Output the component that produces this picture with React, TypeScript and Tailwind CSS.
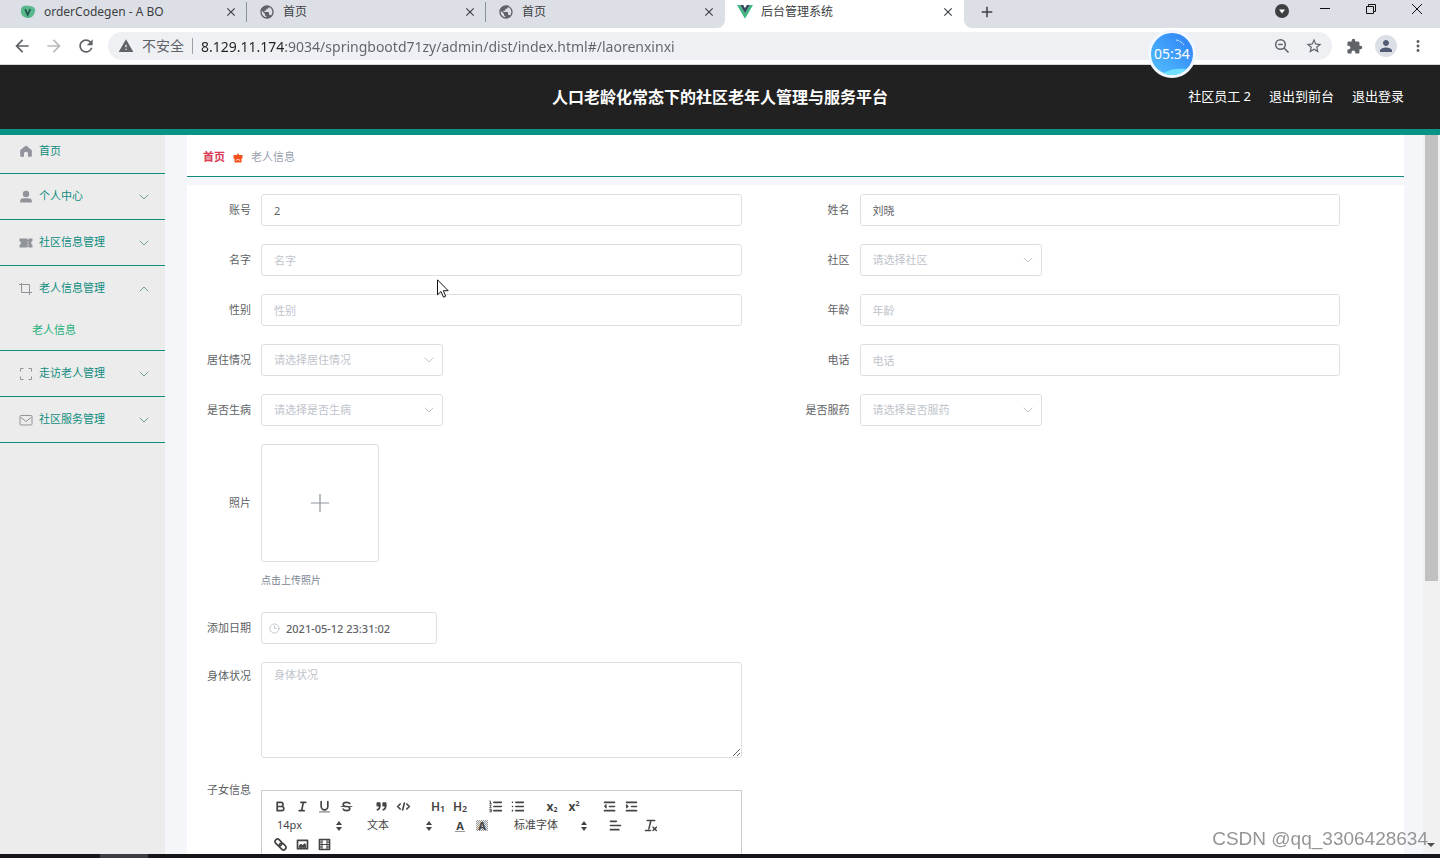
import { useState } from "react";
import type { ReactNode } from "react";
import {
  MdAdd,
  MdArrowBack,
  MdArrowForward,
  MdClose,
  MdExtension,
  MdMoreVert,
  MdPerson,
  MdPublic,
  MdRefresh,
  MdStarBorder,
  MdWarning,
} from "react-icons/md";
import { ChevronDown, ChevronUp, Clock3 } from "lucide-react";

const tabs = [
  { title: "orderCodegen - A BO", icon: <LeafLogo />, active: false },
  { title: "首页", icon: <MdPublic className="w-4 h-4 text-[#5f6368]" />, active: false },
  { title: "首页", icon: <MdPublic className="w-4 h-4 text-[#5f6368]" />, active: false },
  { title: "后台管理系统", icon: <VueLogo />, active: true },
];

const menu = [
  { title: "个人中心", icon: <UserIcon /> },
  { title: "社区信息管理", icon: <TicketIcon /> },
  { title: "老人信息管理", icon: <CropIcon />, children: ["老人信息"] },
  { title: "走访老人管理", icon: <FullScreenIcon /> },
  { title: "社区服务管理", icon: <MessageIcon /> },
];

function LeafLogo() {
  return (
    <svg viewBox="0 0 14 14" className="w-4 h-4">
      <path d="M1 4C2 1 6 1 9 2c3 0 5 2 4 5-1 4-4 6-7 5C2 12 0 8 1 4Z" fill="#57b98c" />
      <path d="M4.5 4.5 6.7 9.5 9 4.5" fill="none" stroke="#24574a" strokeWidth="1.6" />
    </svg>
  );
}

function VueLogo() {
  return (
    <svg viewBox="0 0 16 14" className="w-4 h-4">
      <path d="M0 0h3.2L8 8.3 12.8 0H16L8 13.8Z" fill="#41b883" />
      <path d="M3.2 0h3L8 3.2 9.8 0h3L8 8.3Z" fill="#35495e" />
    </svg>
  );
}

function HomeIcon() {
  return (
    <svg viewBox="0 0 14 14" className="w-[14px] h-[14px]" fill="#909399">
      <path d="M7 1.5 12.6 6c.2.2.2.4.2.6V12c0 .4-.3.7-.7.7H9V9.500c0-1-.9-1.700-2-1.700s-2 .7-2 1.700v3.200H1.900c-.4 0-.7-.3-.7-.7V6.600c0-.2 0-.4.200-.6Z" />
    </svg>
  );
}

function UserIcon() {
  return (
    <svg viewBox="0 0 14 14" className="w-[14px] h-[14px]" fill="#909399">
      <circle cx="7" cy="4" r="3.2" />
      <path d="M1.2 12.5V11c0-1.6 1.3-2.7 3-2.7h5.600c1.700 0 3 1.100 3 2.700v1.500Z" />
    </svg>
  );
}

function TicketIcon() {
  return (
    <svg viewBox="0 0 14 14" className="w-[14px] h-[14px]" fill="#909399">
      <path d="M.5 2.500h8v1.300h1V2.500h4v2.600a2 2 0 0 0 0 3.800v2.600h-4v-1.300h-1v1.300h-8V8.900a2 2 0 0 0 0-3.800Zm8 3v1.300h1V5.500Zm0 2.500v1.300h1V8Z" />
    </svg>
  );
}

function CropIcon() {
  return (
    <svg viewBox="0 0 14 14" className="w-[14px] h-[14px]" fill="none" stroke="#909399">
      <path d="M2.500 1v9.500H13M0 2.500h10.500V13" />
    </svg>
  );
}

function FullScreenIcon() {
  return (
    <svg viewBox="0 0 14 14" className="w-[14px] h-[14px]" fill="none" stroke="#909399">
      <path d="M4.500 1.500h-3v3M9.500 1.500h3v3M1.500 9.500v3h3M12.500 9.500v3h-3" />
    </svg>
  );
}

function MessageIcon() {
  return (
    <svg viewBox="0 0 14 14" className="w-[14px] h-[14px]" fill="none" stroke="#909399">
      <rect x="1" y="2.500" width="12" height="9.500" rx="1" />
      <path d="m2 4.500 5 4 5-4" />
    </svg>
  );
}

function Glyph({ children }: { children: ReactNode }) {
  return (
    <svg viewBox="0 0 18 18" className="w-[15px] h-[15px]" fill="none" stroke="#444" strokeWidth="2" strokeLinecap="round" strokeLinejoin="round">
      {children}
    </svg>
  );
}

function ToolButton({ label, children }: { label: string; children: ReactNode }) {
  return (
    <button type="button" aria-label={label} className="w-[22px] h-[19px] flex items-center justify-center text-[#444]">
      {children}
    </button>
  );
}

function PickerSelect({ label, options, className }: { label: string; options: string[]; className: string }) {
  return (
    <span className={`relative flex items-center ${className}`}>
      <select aria-label={label} className="appearance-none w-full h-[19px] pl-2 text-[11px] text-[#444] bg-transparent outline-none">
        {options.map((option) => (
          <option key={option}>{option}</option>
        ))}
      </select>
      <svg viewBox="0 0 6 10" className="absolute right-1 w-[6px] h-[10px] pointer-events-none" fill="#444">
        <path d="M3 0 6 4H0ZM3 10 0 6h6Z" />
      </svg>
    </span>
  );
}

function BrowserChrome() {
  return (
    <div className="shrink-0">
      {/* Tab strip */}
      <div className="flex h-7 bg-white text-[#3c4043]">
        <div className="flex pl-2 bg-[#dcdfe6] rounded-br-lg">
          {tabs.slice(0, 3).map((tab, i) => (
            <BrowserTab key={i} {...tab} divider={i < 2} />
          ))}
        </div>
        <BrowserTab {...tabs[3]} divider={false} />
        <div className="flex flex-1 justify-between bg-[#dcdfe6] rounded-bl-lg">
          <button type="button" aria-label="新标签页" className="w-11 h-6 pl-px flex items-center justify-center">
            <MdAdd className="w-[18px] h-[18px]" />
          </button>
          <div className="flex h-[22px] items-center">
            <button type="button" aria-label="搜索标签页" className="w-10 flex justify-center">
              <svg viewBox="0 0 14 14" className="w-[14px] h-[14px]">
                <circle cx="7" cy="7" r="7" fill="#3c4043" />
                <path d="M4 5.500h6L7 9.500Z" fill="#fff" />
              </svg>
            </button>
            <button type="button" aria-label="最小化" className="w-[46px] flex justify-center pb-1">
              <svg viewBox="0 0 12 12" className="w-3 h-3" stroke="#111">
                <path d="M1 5.500h10" />
              </svg>
            </button>
            <button type="button" aria-label="还原" className="w-[46px] flex justify-center pb-1">
              <svg viewBox="0 0 12 12" className="w-3 h-3" fill="none" stroke="#111">
                <path d="M1.500 3.500h7v7h-7ZM3.500 3.500v-2h7v7h-2" />
              </svg>
            </button>
            <button type="button" aria-label="关闭" className="w-[46px] flex justify-center pb-1">
              <svg viewBox="0 0 12 12" className="w-3 h-3" stroke="#111">
                <path d="m1 1 10 10M11 1 1 11" />
              </svg>
            </button>
          </div>
        </div>
      </div>

      {/* Address bar */}
      <div className="flex items-center h-[37px] pl-1.5 pr-1.5 bg-white border-b border-[#d5d7db] text-[#5f6368]">
        <button type="button" aria-label="后退" className="w-8 flex justify-center">
          <MdArrowBack className="w-5 h-5" />
        </button>
        <button type="button" aria-label="前进" className="w-8 flex justify-center text-[#b8babd]">
          <MdArrowForward className="w-5 h-5" />
        </button>
        <button type="button" aria-label="重新加载" className="w-8 flex justify-center">
          <MdRefresh className="w-5 h-5" />
        </button>
        <div className="flex flex-1 items-center h-7 ml-1.5 pl-2.5 pr-0.5 rounded-full bg-[#eff0f3]">
          <MdWarning className="w-4 h-4" />
          <span className="ml-2 text-sm">不安全</span>
          <span className="w-px h-4 mx-2 bg-[#9aa0a6]" />
          {/* Host part is darker than the path */}
          <input
            aria-label="地址"
            defaultValue="8.129.11.174:9034/springbootd71zy/admin/dist/index.html#/laorenxinxi"
            className="flex-1 min-w-0 h-7 text-sm text-transparent bg-clip-text bg-[linear-gradient(90deg,#202124_84px,#5f6368_84px)] outline-none"
          />
          <button type="button" aria-label="缩小" className="w-8 flex justify-center">
            <svg viewBox="0 0 16 16" className="w-4 h-4" fill="none" stroke="#5f6368" strokeWidth="1.5">
              <circle cx="6.500" cy="6.500" r="4.800" />
              <path d="m10 10 4.500 4.500M4.200 6.500h4.600" />
            </svg>
          </button>
          <button type="button" aria-label="收藏" className="w-8 flex justify-center">
            <MdStarBorder className="w-[18px] h-[18px]" />
          </button>
        </div>
        <button type="button" aria-label="扩展程序" className="w-8 ml-1.5 flex justify-center">
          <MdExtension className="w-[17px] h-[17px]" />
        </button>
        <button type="button" aria-label="用户" className="w-8 flex justify-center">
          <span className="w-[22px] h-[22px] rounded-full bg-[#dcdfe6] flex items-center justify-center">
            <MdPerson className="w-[18px] h-[18px] text-[#4f5b73]" />
          </span>
        </button>
        <button type="button" aria-label="更多" className="w-8 flex justify-center">
          <MdMoreVert className="w-[18px] h-[18px]" />
        </button>
      </div>
    </div>
  );
}

function BrowserTab({ title, icon, active, divider }: { title: string; icon: ReactNode; active: boolean; divider: boolean }) {
  return (
    <div className={`flex items-center w-[239px] h-6 pl-3 ${active ? "bg-white" : ""}`}>
      {icon}
      <span className="flex-1 ml-2 text-xs whitespace-nowrap">{title}</span>
      <button type="button" aria-label="关闭标签页" className="mr-2">
        <MdClose className="w-[14px] h-[14px]" />
      </button>
      <span className={`w-px h-5 ${divider ? "bg-[#8b8f96]" : ""}`} />
    </div>
  );
}

function Sidebar() {
  const [open, setOpen] = useState("老人信息管理");

  return (
    <nav className="w-[165px] shrink-0 bg-[#ececec] text-[11px] text-[#0f8c7e]">
      <a href="#/" className="flex items-center h-[39px] pl-[19px] pb-[6px] border-b border-[#0f8c7e]">
        <HomeIcon />
        <span className="ml-[6px]">首页</span>
      </a>
      {menu.map((item) => (
        <div key={item.title} className="border-b border-[#0f8c7e]">
          <button
            type="button"
            onClick={() => setOpen(open === item.title ? "" : item.title)}
            className="flex items-center w-full h-[45px] pl-[19px] pr-[13px]"
          >
            {item.icon}
            <span className="flex-1 ml-[6px] text-left">{item.title}</span>
            {open === item.title ? (
              <ChevronUp className="w-4 h-4 text-[#6f9f99]" strokeWidth={1.5} />
            ) : (
              <ChevronDown className="w-4 h-4 text-[#6f9f99]" strokeWidth={1.5} />
            )}
          </button>
          {open === item.title &&
            item.children?.map((child) => (
              <a key={child} href="#/laorenxinxi" className="flex items-center h-[39px] pl-8 text-[#1fb07a]">
                {child}
              </a>
            ))}
        </div>
      ))}
    </nav>
  );
}

function Field({ id, label, children }: { id: string; label: string; children: ReactNode }) {
  return (
    <div className="flex items-center gap-[10px] pr-[54px]">
      <label htmlFor={id} className="w-[54px] shrink-0 text-right">
        {label}
      </label>
      {children}
    </div>
  );
}

function TextField({ id, label, value }: { id: string; label: string; value?: string }) {
  return (
    <Field id={id} label={label}>
      <input
        id={id}
        defaultValue={value}
        placeholder={label}
        className="flex-1 min-w-0 h-8 px-3 border border-[#dcdfe6] rounded-[3px] bg-white text-[#606266] placeholder:text-[#c0c4cc] outline-none"
      />
    </Field>
  );
}

function SelectField({ id, label }: { id: string; label: string }) {
  return (
    <Field id={id} label={label}>
      <div className="relative w-[182px]">
        <select id={id} className="appearance-none w-full h-8 px-3 border border-[#dcdfe6] rounded-[3px] bg-white text-[#c0c4cc] outline-none">
          <option>请选择{label}</option>
        </select>
        <ChevronDown className="absolute right-[6px] top-2 w-4 h-4 text-[#c0c4cc] pointer-events-none" strokeWidth={1.5} />
      </div>
    </Field>
  );
}

function Editor() {
  return (
    <div className="flex-1 h-[300px] mt-[14px] px-[7px] py-[6px] border border-[#ccc]">
      <div className="flex gap-[13px]">
        <div className="flex">
          <ToolButton label="加粗">
            <Glyph>
              <path d="M5 4h4.500a2.500 2.500 0 0 1 0 5H5ZM5 9h5.500a2.500 2.500 0 0 1 0 5H5Z" />
            </Glyph>
          </ToolButton>
          <ToolButton label="斜体">
            <Glyph>
              <path d="M7 4h6M5 14h6M8 14l2-10" />
            </Glyph>
          </ToolButton>
          <ToolButton label="下划线">
            <Glyph>
              <path d="M5 3v6a4 4 0 0 0 8 0V3" />
              <path d="M3 15.500h12" strokeWidth="1" />
            </Glyph>
          </ToolButton>
          <ToolButton label="删除线">
            <Glyph>
              <path d="M13 5.500C12.500 4.500 11 4 9 4 6.500 4 5 5 5 6.500S6.500 9 9 9s4 1 4 2.500S11.500 14 9 14s-3.500-.7-4-2" />
              <path d="M2.500 9h13" strokeWidth="1" />
            </Glyph>
          </ToolButton>
        </div>
        <div className="flex">
          <ToolButton label="引用">
            <Glyph>
              <path fill="#444" d="M4 5h3v3H4ZM11 5h3v3h-3Z" />
              <path d="M7 8c0 4-3 5-3 5M14 8c0 4-3 5-3 5" />
            </Glyph>
          </ToolButton>
          <ToolButton label="代码">
            <Glyph>
              <path d="M5 6 2 9l3 3M13 6l3 3-3 3M10 5 8 13" />
            </Glyph>
          </ToolButton>
        </div>
        <div className="flex text-[12px] font-semibold leading-none">
          <ToolButton label="标题一">H<span className="text-[9px] self-end pb-[3px]">1</span></ToolButton>
          <ToolButton label="标题二">H<span className="text-[9px] self-end pb-[3px]">2</span></ToolButton>
        </div>
        <div className="flex">
          <ToolButton label="有序列表">
            <Glyph>
              <path d="M7 4h9M7 9h9M7 14h9" />
              <path d="M2 2.500h1v3M2 5.500h2M2 7.500h2L2 10.500h2M2 12.500h2v3H2M2.500 14H4" strokeWidth="1" />
            </Glyph>
          </ToolButton>
          <ToolButton label="无序列表">
            <Glyph>
              <path d="M7 4h9M7 9h9M7 14h9M3 4h0M3 9h0M3 14h0" />
            </Glyph>
          </ToolButton>
        </div>
        <div className="flex text-[12px] font-bold leading-none">
          <ToolButton label="下标">x<span className="text-[7px] self-end pb-[3px]">2</span></ToolButton>
          <ToolButton label="上标">x<span className="text-[7px] self-start pt-[3px]">2</span></ToolButton>
        </div>
        <div className="flex">
          <ToolButton label="减少缩进">
            <Glyph>
              <path d="M3 14h12M3 4h12M9 9h6" />
              <path fill="#444" strokeWidth="1" d="M5 7v4L3 9Z" />
            </Glyph>
          </ToolButton>
          <ToolButton label="增加缩进">
            <Glyph>
              <path d="M3 14h12M3 4h12M9 9h6" />
              <path fill="#444" strokeWidth="1" d="M3 7v4l2-2Z" />
            </Glyph>
          </ToolButton>
        </div>
      </div>
      <div className="flex gap-[13px]">
        <PickerSelect label="字号" options={["14px", "16px", "18px"]} className="w-[77px]" />
        <PickerSelect label="段落" options={["文本", "标题"]} className="w-[77px]" />
        <div className="flex text-[11px] font-bold leading-none">
          <ToolButton label="文字颜色">
            <span className="px-px border-b border-[#999]">A</span>
          </ToolButton>
          <ToolButton label="背景颜色">
            <span className="px-0.5 bg-[repeating-conic-gradient(#999_0_25%,#eee_0_50%)] bg-[length:2px_2px]">A</span>
          </ToolButton>
        </div>
        <PickerSelect label="字体" options={["标准字体", "宋体"]} className="w-[85px]" />
        <ToolButton label="对齐">
          <Glyph>
            <path d="M3 4h7M3 9h12M3 14h10" />
          </Glyph>
        </ToolButton>
        <ToolButton label="清除格式">
          <Glyph>
            <path d="M5 3h9M9.500 3 7 13M3 15h6M12 11l4 4M16 11l-4 4" strokeWidth="1.800" />
          </Glyph>
        </ToolButton>
      </div>
      <div className="flex">
        <ToolButton label="链接">
          <Glyph>
            <g transform="rotate(45 9 9)">
              <rect x="1" y="6" width="9" height="6" rx="3" />
              <rect x="8" y="6" width="9" height="6" rx="3" />
            </g>
          </Glyph>
        </ToolButton>
        <ToolButton label="图片">
          <Glyph>
            <rect x="3" y="4" width="12" height="10" />
            <path fill="#444" strokeWidth="1" d="M5 12.500v-2L7 8.500l2 1.500 3-2 1 1v3.500Z" />
          </Glyph>
        </ToolButton>
        <ToolButton label="视频">
          <Glyph>
            <rect x="3" y="3" width="12" height="12" />
            <path d="M6 3v12M12 3v12M6 9h6M3 6h3M3 9h3M3 12h3M12 6h3M12 9h3M12 12h3" strokeWidth="1.200" />
          </Glyph>
        </ToolButton>
      </div>
    </div>
  );
}

function ElderForm() {
  return (
    <form className="px-[10px] pt-[9px] bg-white text-[11px] text-[#606266]">
      <div className="grid grid-cols-2 gap-y-[18px]">
        <TextField id="account" label="账号" value="2" />
        <TextField id="realname" label="姓名" value="刘晓" />
        <TextField id="name" label="名字" />
        <SelectField id="community" label="社区" />
        <TextField id="gender" label="性别" />
        <TextField id="age" label="年龄" />
        <SelectField id="living" label="居住情况" />
        <TextField id="phone" label="电话" />
        <SelectField id="sick" label="是否生病" />
        <SelectField id="medicine" label="是否服药" />

        <div className="col-span-2">
          <Field id="photo" label="照片">
            <button id="photo" type="button" className="w-[118px] h-[118px] border border-[#dcdfe6] rounded-[3px] flex items-center justify-center">
              <svg viewBox="0 0 18 18" className="w-[18px] h-[18px]" stroke="#8c939d" strokeWidth="1.200">
                <path d="M9 0v18M0 9h18" />
              </svg>
            </button>
          </Field>
          <p className="pl-16 mt-[10px] text-[10px] leading-4 text-[#7b8492]">点击上传照片</p>
        </div>

        <div className="col-span-2 pt-[6px]">
          <Field id="date" label="添加日期">
            <div className="relative w-[176px]">
              <Clock3 className="absolute left-2 top-[11px] w-[11px] h-[11px] text-[#c0c4cc]" />
              <input
                id="date"
                defaultValue="2021-05-12 23:31:02"
                className="w-full h-8 pl-6 pr-2 border border-[#dcdfe6] rounded-[3px] font-medium outline-none"
              />
            </div>
          </Field>
        </div>

        <div className="flex gap-[10px] pr-[54px]">
          <label htmlFor="health" className="w-[54px] shrink-0 text-right leading-7">
            身体状况
          </label>
          <textarea
            id="health"
            placeholder="身体状况"
            className="flex-1 min-w-0 h-24 px-3 py-1 border border-[#dcdfe6] rounded-[3px] placeholder:text-[#c0c4cc] outline-none"
          />
        </div>

        <div className="col-start-1 flex gap-[10px] pr-[54px]">
          <span className="w-[54px] shrink-0 text-right leading-7">子女信息</span>
          <Editor />
        </div>
      </div>
    </form>
  );
}

export default function App() {
  return (
    <div className="relative flex flex-col h-screen overflow-hidden font-['Noto_Sans','Noto_Sans_CJK_SC',sans-serif]">
      <BrowserChrome />

      {/* Header */}
      <header className="grid grid-cols-[1fr_auto_1fr] items-center shrink-0 h-[70px] px-9 bg-[#212121] border-b-[6px] border-[#0a9488] text-white">
        <h1 className="col-start-2 text-base font-bold">人口老龄化常态下的社区老年人管理与服务平台</h1>
        <div className="flex justify-end gap-[18px] text-[13px]">
          <span>社区员工 2</span>
          <a href="#/front">退出到前台</a>
          <a href="#/logout">退出登录</a>
        </div>
      </header>

      <div className="flex flex-1 min-h-0">
        <Sidebar />
        <main className="flex-1 min-w-0 overflow-y-auto [scrollbar-width:none] pl-[22px] pr-[19px] bg-[#f4f6fa]">
          <div className="flex items-center gap-2 h-[42px] px-4 pt-1 mb-2 bg-white border-b border-[#0f8c7e] text-[11px]">
            <a href="#/" className="font-bold text-[#d93a55]">首页</a>
            <svg viewBox="0 0 10 10" className="w-[10px] h-[10px]">
              <path d="M5 0 6.200 2H9.500V5L8.500 6V9.500H1.500V6L.5 5V2H3.800Z" fill="#f4511e" />
              <path d="M3.500 8V6.500h3V8" fill="none" stroke="#ffb199" />
            </svg>
            <span className="text-[#97a0ae]">老人信息</span>
          </div>
          <ElderForm />
        </main>
        <div className="relative w-[17px] shrink-0 px-0.5 bg-[#f1f1f1]">
          <div className="h-[62%] bg-[#c1c1c1]" />
          <svg viewBox="0 0 8 4" className="absolute bottom-[7px] left-1 w-2 h-1" fill="#505050">
            <path d="M0 0h8L4 4Z" />
          </svg>
        </div>
      </div>

      <div className="shrink-0 h-1 pl-[100px] bg-[#15151c]">
        <div className="w-12 h-full bg-[#3d3d45]" />
      </div>

      {/* Recording timer */}
      <div className="absolute top-[30px] right-[244px] w-12 h-12 rounded-full border-[3px] border-[#f0f7ff] bg-linear-to-tr from-[#55c0fb] to-[#2f7df6] overflow-hidden flex items-center justify-center text-sm text-white">
        <svg viewBox="0 0 42 42" className="absolute inset-0 w-full h-full" fill="none">
          <path d="M12 40c8-4 14-5 24-4l-6 6H14Z" fill="#6fe0ff" />
          <path d="M25 7c3 .4 6 2 8 5" stroke="#d6ecff" strokeDasharray="3 1" />
        </svg>
        <span className="relative">05:34</span>
      </div>

      {/* Mouse pointer */}
      <svg viewBox="0 0 12 19" className="absolute left-[437px] top-[279px] w-3 h-[19px]" fill="#fff" stroke="#111">
        <path d="M.5.8v15L4 12.500l2.500 5.700 2.200-1L6.300 11.700h4.900Z" />
      </svg>

      <div className="absolute right-3 bottom-[6px] text-[19px] leading-[26px] text-[#959595] font-['Liberation_Sans',sans-serif] pointer-events-none">
        CSDN @qq_3306428634
      </div>
    </div>
  );
}
